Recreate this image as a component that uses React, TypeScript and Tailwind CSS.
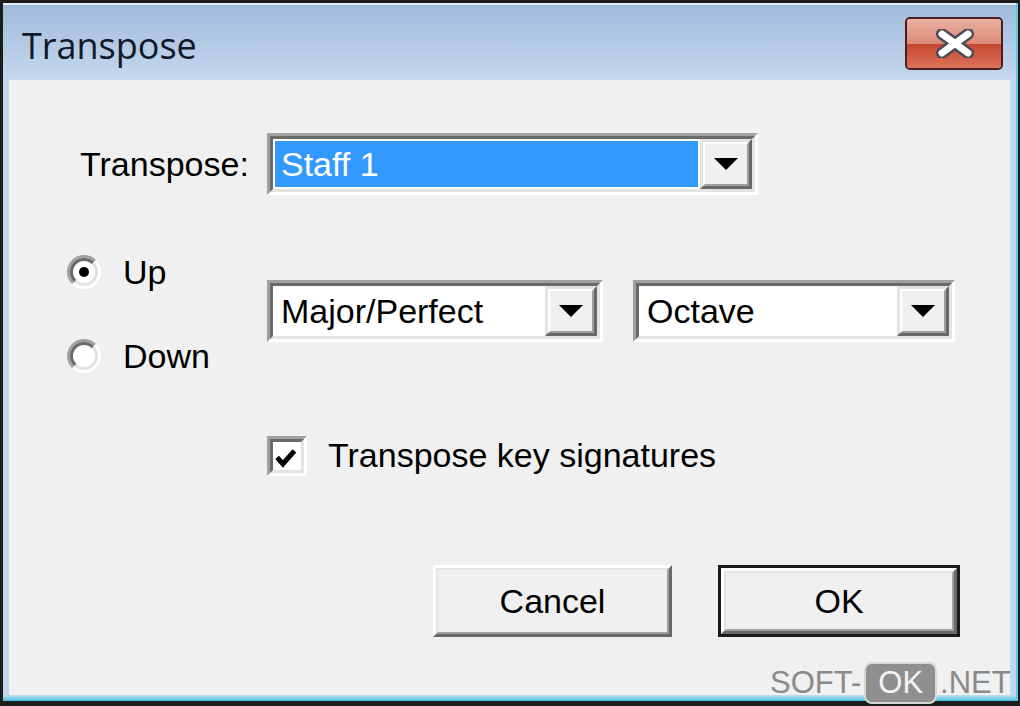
import React from "react";

const font = { fontFamily: '"Liberation Sans", Arial, sans-serif' };

// sunken 3d frame used by combos, radios and the checkbox
function Sunken({ className, children }: { className: string; children: React.ReactNode }) {
  return (
    <div className={"border-[3px] border-t-[#a0a0a0] border-l-[#a0a0a0] border-r-white border-b-white " + className}>
      <div className="w-full h-full border-[3px] border-t-[#696969] border-l-[#696969] border-r-[#e3e3e3] border-b-[#e3e3e3] bg-white flex">
        {children}
      </div>
    </div>
  );
}

function Arrow() {
  return (
    <svg width="24" height="12" viewBox="0 0 24 12">
      <polygon points="0,0 24,0 12,12" fill="#000" />
    </svg>
  );
}

function Combo({ text, width, selected }: { text: string; width: string; selected?: boolean }) {
  return (
    <Sunken className={width + " h-[62px]"}>
      <div className="flex-1 flex items-center p-[2px]">
        <div
          className={
            "w-full h-full flex items-center pl-[6px] text-[34px] " +
            (selected ? "bg-[#3399ff] text-white" : "text-black")
          }
        >
          {text}
        </div>
      </div>
      <div className="w-[52px] border-[3px] border-t-[#e3e3e3] border-l-[#e3e3e3] border-r-[#696969] border-b-[#696969]">
        <div className="w-full h-full border-[2px] border-t-white border-l-white border-r-[#a0a0a0] border-b-[#a0a0a0] bg-[#f0f0f0] flex items-center justify-center">
          <Arrow />
        </div>
      </div>
    </Sunken>
  );
}

function Radio({ label, checked }: { label: string; checked?: boolean }) {
  return (
    <div className="flex items-center h-[40px]">
      <div className="w-[34px] h-[34px] rounded-full border-[3px] border-t-[#a0a0a0] border-l-[#a0a0a0] border-r-white border-b-white">
        <div className="w-full h-full rounded-full border-[3px] border-t-[#696969] border-l-[#696969] border-r-[#e3e3e3] border-b-[#e3e3e3] bg-white flex items-center justify-center">
          {checked && <div className="w-[10px] h-[10px] rounded-full bg-black" />}
        </div>
      </div>
      <span className="ml-[22px] text-[34px] text-black">{label}</span>
    </div>
  );
}

function Button({ text, def }: { text: string; def?: boolean }) {
  const inner = (
    <div className="w-full h-full border-[3px] border-t-white border-l-white border-r-[#696969] border-b-[#696969]">
      <div className="w-full h-full border-[2px] border-t-[#e3e3e3] border-l-[#e3e3e3] border-r-[#a0a0a0] border-b-[#a0a0a0] bg-[#f0f0f0] flex items-center justify-center text-[34px] text-black">
        {text}
      </div>
    </div>
  );
  if (def) {
    return <div className="w-[242px] h-[72px] border-[3px] border-[#1a1a1a]">{inner}</div>;
  }
  return <div className="w-[239px] h-[72px]">{inner}</div>;
}

export default function App() {
  return (
    <div className="w-[1020px] h-[706px] bg-[#1c1c1c] pt-[3px] pl-[3px] pr-[2px] pb-[5px]" style={font}>
      <div className="relative w-full h-full flex flex-col bg-[#c3d7ee] border-r-[2px] border-[#5cc8e6]">
        {/* title bar */}
        <div className="h-[77px] flex justify-between border-t-2 border-[#e6eef7] bg-gradient-to-b from-[#a1bbda] to-[#c4d8ee]">
          <div
            className="pl-[19px] pt-[14px] text-[36px] text-[#111827]"
            style={{ fontFamily: '"Open Sans", "Noto Sans", sans-serif' }}
          >
            Transpose
          </div>
          <div className="mt-[12px] mr-[13px] w-[98px] h-[53px] rounded-[5px] border-[2px] border-[#4a1c20] overflow-hidden flex flex-col">
            <div className="flex-1 flex flex-col relative">
              <div className="h-1/2 bg-gradient-to-b from-[#eab0a2] to-[#dc8a76]" />
              <div className="h-1/2 bg-gradient-to-b from-[#c44530] to-[#dc7258]" />
              <svg className="absolute left-[29px] top-[10px]" width="38" height="29" viewBox="0 0 38 29">
                <path
                  d="M6 5 L32 24 M32 5 L6 24"
                  stroke="#4b4b55"
                  strokeWidth="12"
                  strokeLinecap="round"
                />
                <path
                  d="M6 5 L32 24 M32 5 L6 24"
                  stroke="#ffffff"
                  strokeWidth="7"
                  strokeLinecap="round"
                />
              </svg>
            </div>
          </div>
        </div>

        {/* client area */}
        <div className="flex-1 ml-[6px] mr-[6px] bg-[#f0f0f0] flex flex-col">
          <div className="mt-[53px] flex items-center">
            <div className="ml-[71px] w-[187px] text-[34px] text-black">Transpose:</div>
            <Combo text="Staff 1" width="w-[491px]" selected />
          </div>

          <div className="mt-[57px] flex items-start">
            <div className="ml-[58px] w-[200px] flex flex-col gap-[44px]">
              <Radio label="Up" checked />
              <Radio label="Down" />
            </div>
            <div className="mt-[28px] flex gap-[30px]">
              <Combo text="Major/Perfect" width="w-[336px]" />
              <Combo text="Octave" width="w-[322px]" />
            </div>
          </div>

          <div className="mt-[54px] ml-[258px] flex items-center">
            <Sunken className="w-[40px] h-[40px]">
              <svg width="34" height="34" viewBox="0 0 34 34">
                <path d="M5 15 L12 23 L26 7" stroke="#000" strokeWidth="6" fill="none" />
              </svg>
            </Sunken>
            <span className="ml-[21px] text-[34px] text-black">Transpose key signatures</span>
          </div>

          <div className="mt-[84px] ml-[424px] flex gap-[46px]">
            <Button text="Cancel" />
            <Button text="OK" def />
          </div>
        </div>

        {/* bottom frame */}
        <div className="h-[6px] bg-gradient-to-b from-[#bfe0f0] to-[#3ec0e2]" />

        {/* watermark */}
        <div className="absolute left-[767px] top-[657px] flex items-center text-[31px] text-[#8a8a8a]">
          <span>SOFT-</span>
          <span className="ml-[3px] px-[12px] h-[42px] flex items-center rounded-[8px] bg-[#8f8f8f] text-[#f4f4f4] border-[2px] border-[#d8d8d8]">
            OK
          </span>
          <span className="ml-[3px]">.NET</span>
        </div>
      </div>
    </div>
  );
}
